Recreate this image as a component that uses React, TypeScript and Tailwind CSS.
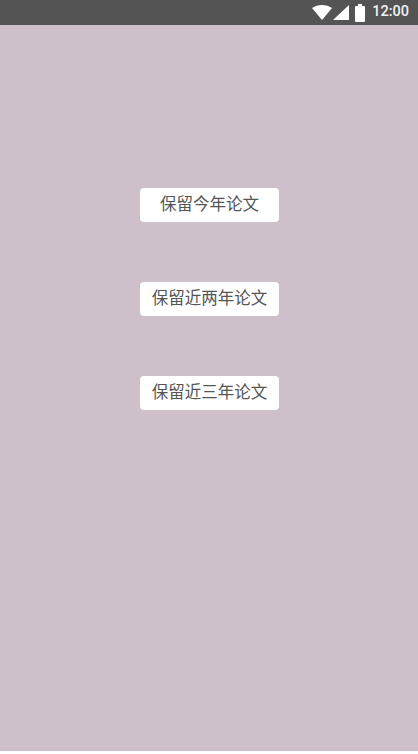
const labels = ['保留今年论文', '保留近两年论文', '保留近三年论文'];

function StatusBar() {
  return (
    <div className="flex h-[25px] items-center justify-end bg-[#545454] pr-[9px] text-white">
      <svg width="20" height="15" viewBox="0 0 20 15">
        <path d="M0 3C3 1 6.3 0 10 0s7 1 10 3L10 15z" fill="#fff" />
      </svg>
      <svg width="16" height="15" viewBox="0 0 16 15" className="ml-[1px]">
        <path d="M16 0v15H0z" fill="#fff" />
      </svg>
      <svg width="10" height="18" viewBox="0 0 10 18" className="ml-[6px]">
        <path d="M3 0h4v2h2a1 1 0 0 1 1 1v14a1 1 0 0 1-1 1H1a1 1 0 0 1-1-1V3a1 1 0 0 1 1-1h2z" fill="#fff" />
      </svg>
      <span className="ml-[7px] font-['Roboto',sans-serif] text-[14.5px] font-medium leading-none text-[#f2f2f2]">
        12:00
      </span>
    </div>
  );
}

export default function App() {
  return (
    <div className="flex h-[754px] w-[418px] flex-col bg-white font-['Roboto','Noto_Sans_CJK_SC',sans-serif]">
      <StatusBar />
      <div className="flex h-[726px] flex-col items-center gap-[60px] bg-[#cdc0cb] pt-[163px]">
        {labels.map((label) => (
          <button
            key={label}
            className="ml-[1px] flex h-[34px] w-[139px] items-center justify-center rounded-[4px] bg-white text-[16.5px] text-[#555555]"
          >
            {label}
          </button>
        ))}
      </div>
    </div>
  );
}
